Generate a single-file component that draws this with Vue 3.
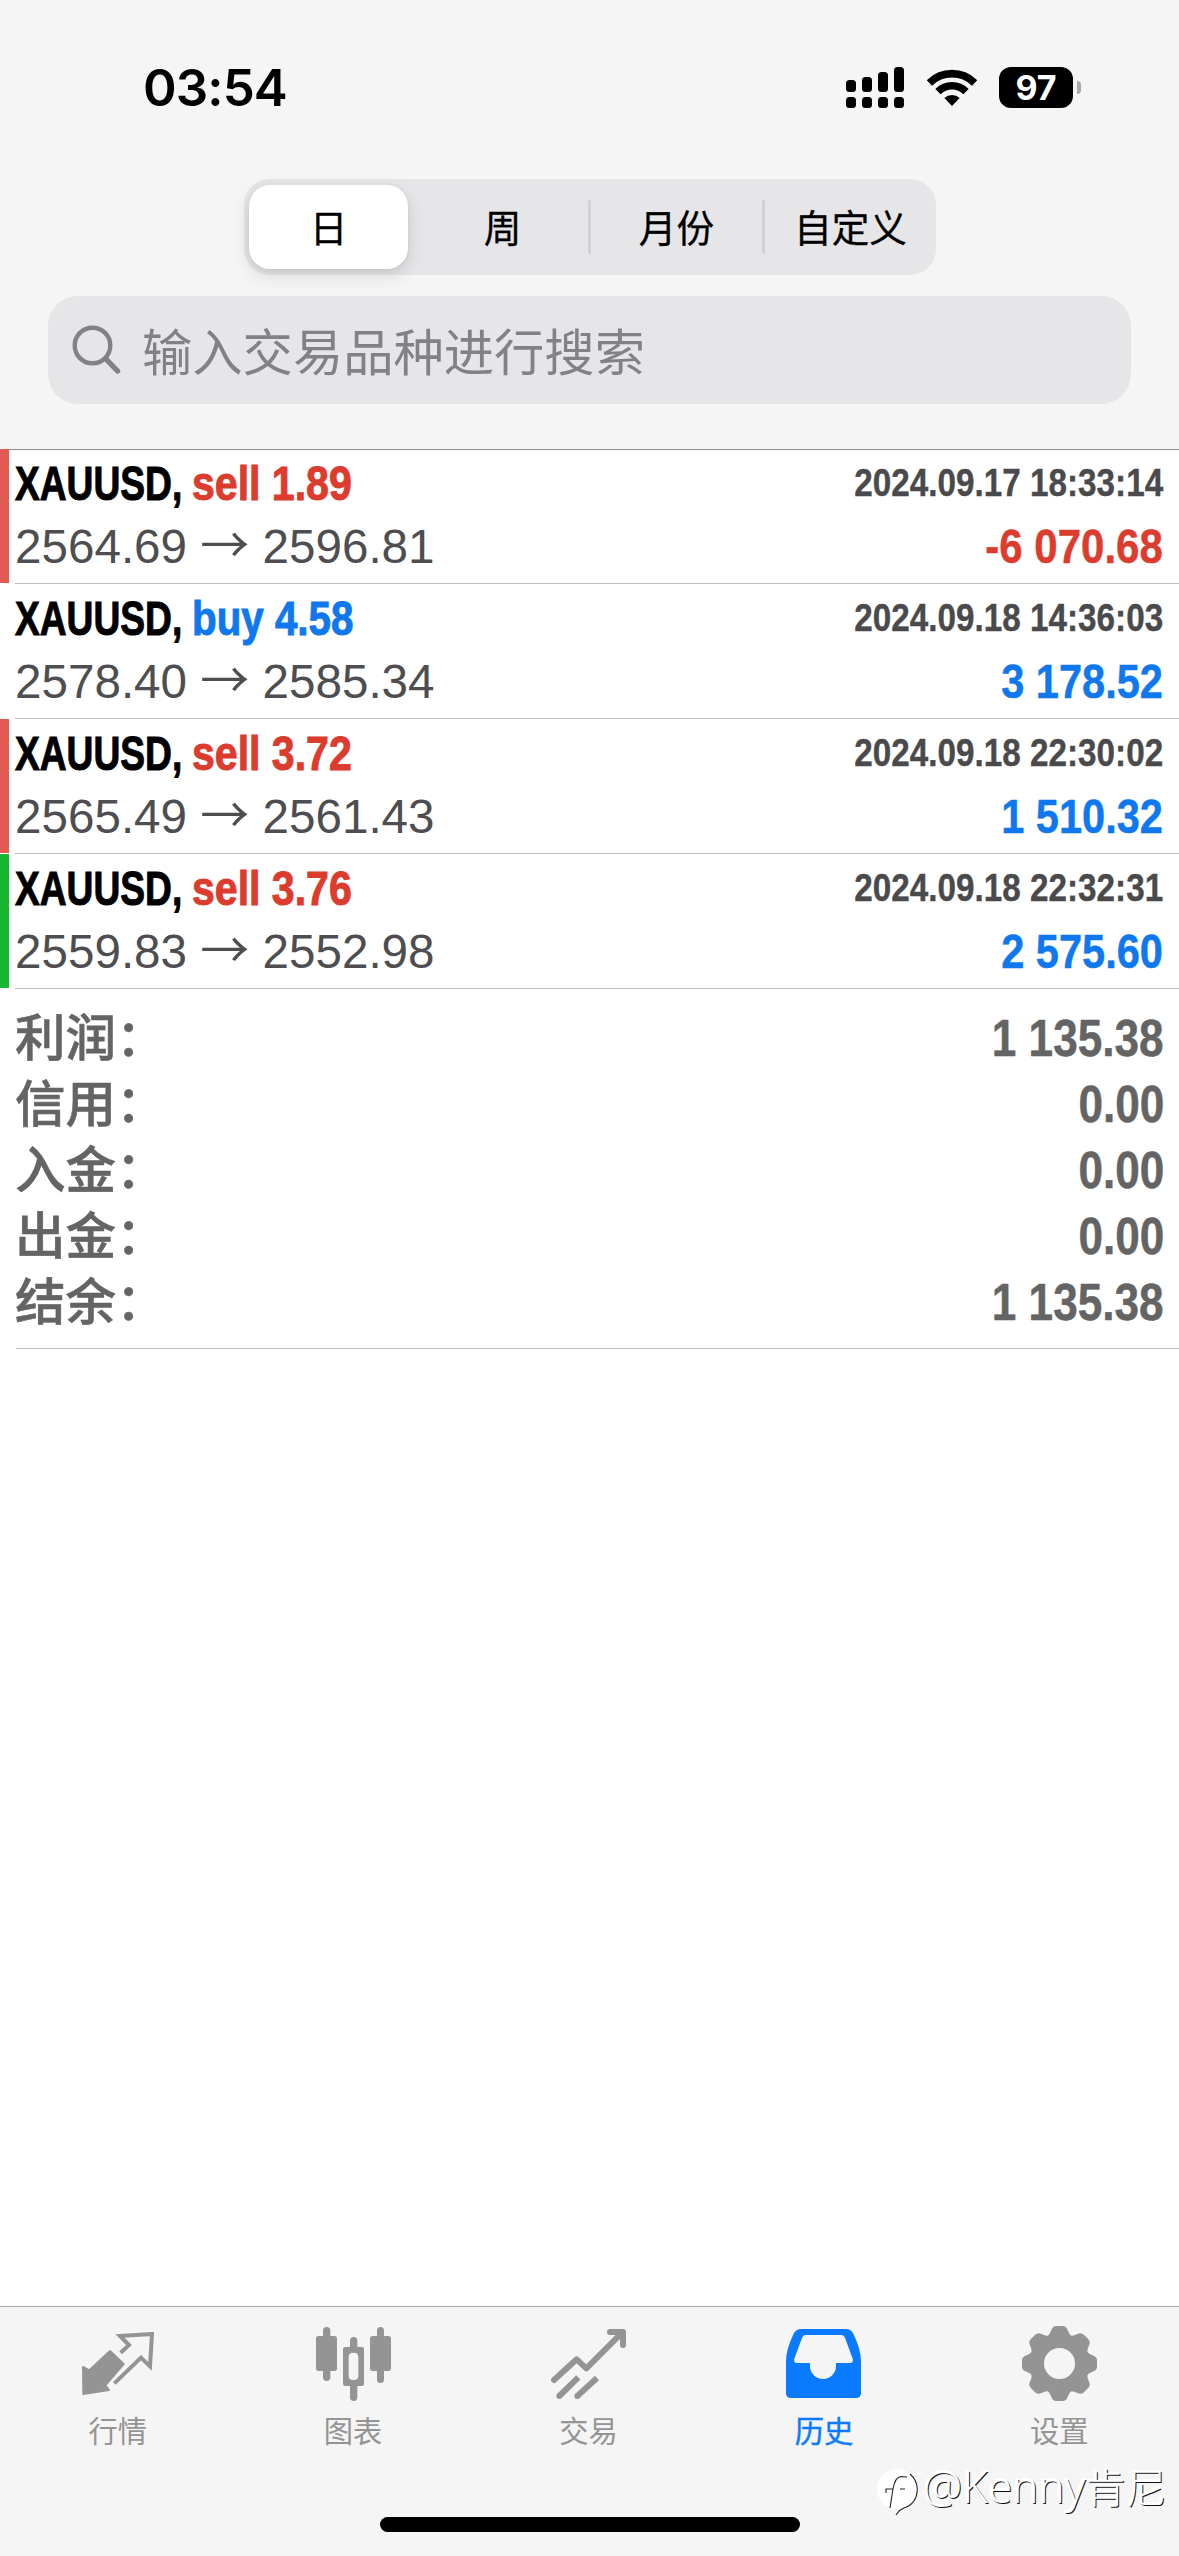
<script setup>
import { ref } from 'vue'

const ranges = ['日', '周', '月份', '自定义']
const activeRange = ref(0)

const deals = [
  { symbol: 'XAUUSD,', side: 'sell', volume: '1.89', open: '2564.69', close: '2596.81', time: '2024.09.17 18:33:14', profit: '-6 070.68', mark: 'sl' },
  { symbol: 'XAUUSD,', side: 'buy', volume: '4.58', open: '2578.40', close: '2585.34', time: '2024.09.18 14:36:03', profit: '3 178.52', mark: '' },
  { symbol: 'XAUUSD,', side: 'sell', volume: '3.72', open: '2565.49', close: '2561.43', time: '2024.09.18 22:30:02', profit: '1 510.32', mark: 'sl' },
  { symbol: 'XAUUSD,', side: 'sell', volume: '3.76', open: '2559.83', close: '2552.98', time: '2024.09.18 22:32:31', profit: '2 575.60', mark: 'tp' },
]

const totals = [
  { label: '利润：', value: '1 135.38' },
  { label: '信用：', value: '0.00' },
  { label: '入金：', value: '0.00' },
  { label: '出金：', value: '0.00' },
  { label: '结余：', value: '1 135.38' },
]

const teeth = [0, 45, 90, 135, 180, 225, 270, 315]
</script>

<template>
  <div class="screen">
    <header class="top">
      <div class="status">
        <span class="clock">03:54</span>
        <div class="indicators">
          <svg class="signal" width="58" height="41" viewBox="0 0 58 41">
            <rect x="0" y="13" width="10" height="12" rx="3.5" />
            <rect x="16" y="10" width="10" height="15" rx="3.5" />
            <rect x="32" y="5" width="10" height="20" rx="3.5" />
            <rect x="48" y="0" width="10" height="25" rx="3.5" />
            <rect v-for="n in 4" :key="n" :x="(n - 1) * 16" y="30" width="10" height="11" rx="3.5" />
          </svg>
          <svg class="wifi" width="50" height="37" viewBox="0 0 50 37">
            <path d="M2.4 14 A32 32 0 0 1 47.6 14" fill="none" stroke="#000" stroke-width="7.6" />
            <path d="M11 22.6 A19.6 19.6 0 0 1 39 22.6" fill="none" stroke="#000" stroke-width="7.4" />
            <path d="M17.4 29 A11 11 0 0 1 32.6 29 L25 37 Z" />
          </svg>
          <div class="battery"><span>97</span></div>
          <i class="battery-tip"></i>
        </div>
      </div>

      <div class="segments">
        <button
          v-for="(r, i) in ranges"
          :key="r"
          :class="['segment', { active: i === activeRange, divided: i > 1 }]"
          @click="activeRange = i"
        >{{ r }}</button>
      </div>

      <div class="search">
        <svg width="50" height="50" viewBox="0 0 50 50" fill="none" stroke="#828285" stroke-linecap="round">
          <circle cx="20.5" cy="20.5" r="17.8" stroke-width="4.4" />
          <path d="M34 34 L45.5 46" stroke-width="5.4" />
        </svg>
        <span>输入交易品种进行搜索</span>
      </div>
    </header>

    <main class="content">
      <section v-for="d in deals" :key="d.time" :class="['deal', d.mark]">
        <div class="deal-body">
          <div class="line first">
            <div class="title">
              <span class="symbol">{{ d.symbol }}</span>
              <span :class="['side', d.side]">{{ d.side }} {{ d.volume }}</span>
            </div>
            <span class="time">{{ d.time }}</span>
          </div>
          <div class="line second">
            <span class="prices">{{ d.open }} <span class="arrow">→</span> {{ d.close }}</span>
            <span :class="['profit', { loss: d.profit.startsWith('-') }]">{{ d.profit }}</span>
          </div>
        </div>
      </section>

      <section class="totals">
        <div v-for="t in totals" :key="t.label" class="total">
          <span class="label">{{ t.label }}</span>
          <span class="value">{{ t.value }}</span>
        </div>
      </section>
    </main>

    <nav class="tabs">
      <div class="tab">
        <div class="icon">
          <svg width="72" height="63" viewBox="0 0 216 189">
            <path d="M3 105 L22 115 L84 57 L125 96 L70 160 L81 174 L4 186 Z" fill="currentColor" stroke="currentColor" stroke-width="6" stroke-linejoin="round" />
            <path d="M116 62 L141 39 L114 12 L210 6 L204 103 L177 77 L97 154" fill="none" stroke="currentColor" stroke-width="12" />
          </svg>
        </div>
        <span>行情</span>
      </div>
      <div class="tab">
        <div class="icon">
          <svg width="75" height="74" viewBox="0 0 225 222" fill="currentColor">
            <rect x="21" y="0" width="22" height="162" rx="11" />
            <rect x="0" y="27" width="63" height="105" rx="8" />
            <rect x="102" y="30" width="22" height="46" rx="11" />
            <rect x="102" y="162" width="22" height="60" rx="11" />
            <path fill-rule="evenodd" d="M87 60 H138 Q144 60 144 66 V171 Q144 177 138 177 H87 Q81 177 81 171 V66 Q81 60 87 60 Z M111 77 Q98 77 98 90 V146 Q98 159 111 159 H114 Q127 159 127 146 V90 Q127 77 114 77 Z" />
            <rect x="183" y="0" width="21" height="168" rx="10.5" />
            <rect x="162" y="27" width="63" height="105" rx="8" />
          </svg>
        </div>
        <span>图表</span>
      </div>
      <div class="tab">
        <div class="icon">
          <svg width="75" height="70" viewBox="0 0 225 210" fill="none" stroke="currentColor" stroke-width="18">
            <path d="M9 153 L77 91 L106 118 L208 16" stroke-linecap="round" stroke-linejoin="round" />
            <path d="M177 9 H216 V48" stroke-linecap="round" stroke-linejoin="round" />
            <path d="M25 201 L82 145 M79 201 L138 147" />
            <circle cx="25" cy="201" r="9" fill="currentColor" stroke="none" />
            <circle cx="79" cy="201" r="9" fill="currentColor" stroke="none" />
          </svg>
        </div>
        <span>交易</span>
      </div>
      <div class="tab selected">
        <div class="icon">
          <svg width="75" height="69" viewBox="0 0 75 69" fill="currentColor">
            <path fill-rule="evenodd" d="M15 0 H60 Q65 0 67.5 5 Q75 21 75 32 V64 Q75 69 70 69 H5 Q0 69 0 64 V32 Q0 21 7.5 5 Q10 0 15 0 Z M20 6 Q17 6 16 9 L8.2 30 Q7.4 34 11 34 H24 V37 A13 13 0 0 0 50 37 V34 H64 Q67.6 34 66.8 30 L59 9 Q58 6 55 6 Z" />
          </svg>
        </div>
        <span>历史</span>
      </div>
      <div class="tab">
        <div class="icon">
          <svg width="75" height="75" viewBox="0 0 75 75" fill="currentColor">
            <path
              v-for="a in teeth"
              :key="a"
              :transform="`rotate(${a} 37.5 37.5)`"
              d="M25 11 Q28 8 29.4 4 Q30.6 0 34.5 0 H40.5 Q44.4 0 45.6 4 Q47 8 50 11 Z"
            />
            <circle cx="37.5" cy="37.5" r="22.8" fill="none" stroke="currentColor" stroke-width="14.6" />
          </svg>
        </div>
        <span>设置</span>
      </div>
    </nav>

    <div class="home-bar"></div>

    <div class="watermark">
      <svg width="44" height="48" viewBox="0 0 44 48">
        <path d="M20 0 A20 20 0 0 1 40 20 C40 32 33 37 26 39 Q22 41 19 45 L20 40 A20 20 0 0 1 20 0 Z" fill="#fff" />
        <path d="M33 5 Q40 11 40.3 20 C40 32 33 37 27 39 Q22 41 19 46" fill="none" stroke="#222" stroke-width="1.1" />
        <path d="M13 39 L16 20 Q18 8 24 7.5 L30 8 M9 24 V20 H16 M23 20 H28" fill="none" stroke="#222" stroke-width="1.1" />
      </svg>
      <div class="handle">@Kenny<span>肯尼</span></div>
    </div>
  </div>
</template>

<style>
body {
  margin: 0;
  background: #fff;
}
</style>

<style scoped>
.screen {
  position: relative;
  width: 1179px;
  height: 2556px;
  overflow: hidden;
  display: flex;
  flex-direction: column;
  background: #fff;
  font-family: "Liberation Sans", "Noto Sans CJK SC", sans-serif;
}

.top {
  box-sizing: border-box;
  height: 450px;
  flex: none;
  background: #f5f5f5;
  border-bottom: 1px solid #8a8a8c;
}

.status {
  box-sizing: border-box;
  height: 179px;
  padding: 67px 98px 0 143px;
  display: flex;
  justify-content: space-between;
  align-items: flex-start;
}

.clock {
  font: 600 51px/42px Inter, sans-serif;
  letter-spacing: -0.9px;
  color: #000;
}

.indicators {
  display: flex;
  align-items: center;
  height: 41px;
}

.wifi {
  margin-left: 23px;
}

.battery {
  width: 74px;
  height: 41px;
  margin-left: 22px;
  border-radius: 12px;
  background: #000;
  color: #fff;
  font: 700 34px/41px Inter, sans-serif;
  text-align: center;
}

.battery-tip {
  width: 4px;
  height: 13px;
  margin-left: 4px;
  border-radius: 0 4px 4px 0;
  background: #a8a8a8;
}

.segments {
  box-sizing: border-box;
  width: 692px;
  height: 96px;
  margin-left: 244px;
  padding: 6px 6px 6px 5px;
  border-radius: 26px;
  background: #e6e6e8;
  display: flex;
  gap: 15px;
}

.segment {
  position: relative;
  flex: 1;
  border: 0;
  padding: 0 0 2px 0;
  border-radius: 21px;
  background: transparent;
  color: #000;
  font: 400 37.7px/82px "Noto Sans CJK SC", sans-serif;
  -webkit-text-stroke: 0.3px #000;
  white-space: nowrap;
}

.segment.active {
  background: #fff;
  box-shadow: 0 6px 18px rgba(0, 0, 0, 0.13), 0 1px 4px rgba(0, 0, 0, 0.06);
}

.segment.divided::before {
  content: "";
  position: absolute;
  left: -9px;
  top: 15px;
  width: 3px;
  height: 54px;
  border-radius: 2px;
  background: #d2d2d5;
}

.search {
  box-sizing: border-box;
  width: 1083px;
  height: 108px;
  margin: 21px 0 0 48px;
  padding-left: 24px;
  border-radius: 30px;
  background: #e6e6e8;
  display: flex;
  align-items: center;
  gap: 20px;
  color: #828285;
  font: 400 50.3px/106px "Noto Sans CJK SC", sans-serif;
}

.search span {
  height: 108px;
}

.content {
  flex: 1;
  margin-top: -1px;
}

.deal {
  box-sizing: border-box;
  height: 135px;
  display: flex;
}

.deal::before {
  content: "";
  width: 9px;
  height: 134px;
}

.deal.sl::before {
  background: #e25a50;
}

.deal.tp::before {
  background: #17b82f;
}

.deal-body {
  box-sizing: border-box;
  flex: 1;
  margin-left: 6px;
  padding: 1px 16px 0 0;
  border-bottom: 1px solid #bfbfc1;
}

.line {
  display: flex;
  justify-content: space-between;
  white-space: nowrap;
}

.first {
  height: 66px;
  line-height: 66px;
}

.second {
  height: 62px;
  line-height: 62px;
}

.title {
  display: flex;
  margin-top: 1px;
  font-size: 48px;
  font-weight: 700;
}

/* Condensed bold faces are derived by narrowing the regular-width bold */
.symbol,
.side {
  display: block;
  transform-origin: left;
  -webkit-text-stroke: 1px currentColor;
}

.symbol {
  width: 177px;
  color: #000;
  transform: scaleX(0.774);
}

.side {
  transform: scaleX(0.855);
}

.sell {
  color: #dc3c2e;
}

.buy {
  color: #0f78ee;
  transform: scaleX(0.84);
}

.time {
  font-size: 39px;
  font-weight: 700;
  color: #4a4a4c;
  transform: scaleX(0.853);
  transform-origin: right;
  -webkit-text-stroke: 0.4px currentColor;
}

.prices {
  font-size: 47.6px;
  color: #4e4e50;
}

.arrow {
  display: inline-block;
  font-family: "Noto Sans CJK SC", sans-serif;
  font-size: 49px;
  line-height: 1;
}

.profit {
  font-size: 48px;
  font-weight: 700;
  color: #0f78ee;
  transform: scaleX(0.865);
  transform-origin: right;
  -webkit-text-stroke: 0.5px currentColor;
}

.profit.loss {
  color: #dc3c2e;
  transform: scaleX(0.875);
}

.totals {
  box-sizing: border-box;
  height: 360px;
  margin-left: 16px;
  padding: 17px 15px 0 0;
  border-bottom: 1px solid #bfbfc1;
  color: #646464;
}

.total {
  height: 66px;
  display: flex;
  justify-content: space-between;
  align-items: baseline;
  white-space: nowrap;
}

.label {
  font: 500 50.5px/66px "Liberation Sans", "Noto Sans CJK SC", sans-serif;
  margin-left: -1px;
  -webkit-text-stroke: 0.6px currentColor;
}

.value {
  font-size: 51px;
  line-height: 66px;
  font-weight: 700;
  transform: scaleX(0.865);
  transform-origin: right;
  -webkit-text-stroke: 0.5px currentColor;
}

.tabs {
  box-sizing: border-box;
  height: 250px;
  flex: none;
  padding-right: 2px;
  border-top: 1px solid #a9a9ab;
  background: #f5f5f5;
  display: flex;
  align-items: flex-start;
}

.tab {
  flex: 1;
  display: flex;
  flex-direction: column;
  align-items: center;
  color: #949494;
  font: 400 29.3px/40px "Noto Sans CJK SC", sans-serif;
}

.selected {
  color: #0a7aff;
}

.icon {
  height: 87px;
  margin-top: 13px;
  display: flex;
  align-items: center;
}

.icon svg {
  display: block;
}

.tab > span {
  margin-top: 2px;
}

.selected > span {
  -webkit-text-stroke: 0.4px currentColor;
}

.home-bar {
  position: absolute;
  left: 380px;
  top: 2517px;
  width: 420px;
  height: 15px;
  border-radius: 8px;
  background: #000;
}

.watermark {
  position: absolute;
  left: 877px;
  top: 2469px;
  display: flex;
  align-items: flex-start;
  gap: 2px;
  color: #fff;
  white-space: nowrap;
  text-shadow: 1px 1px 0 #111, -1px -1px 0 #fff;
}

.handle {
  margin-top: -8px;
  font: 300 44px/50px "Noto Sans", "Noto Sans CJK SC", sans-serif;
}

.handle span {
  font-size: 40.5px;
}
</style>
